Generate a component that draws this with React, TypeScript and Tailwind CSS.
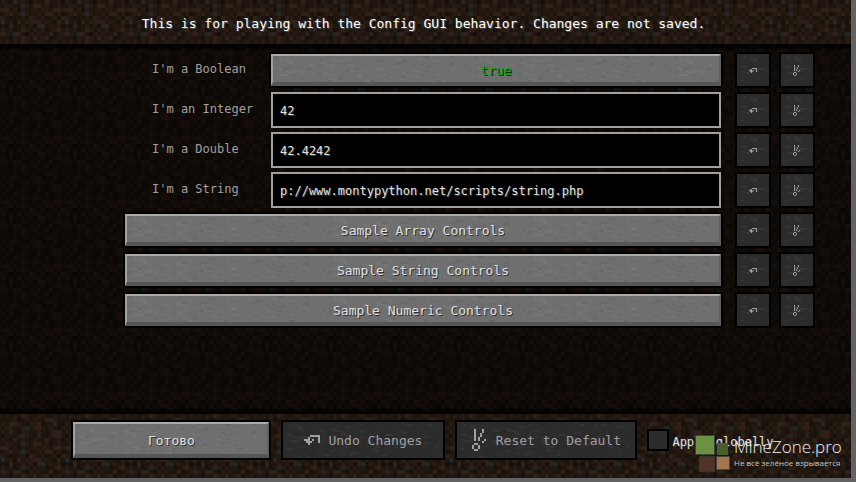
import { useState } from "react";
import type { ReactNode } from "react";

// 16x16 dirt tile, one digit per texel (index into DIRT_COLORS)
const DIRT_COLORS = ["#17110c", "#1e150e", "#261b13", "#2f2118", "#22272a"];

const DIRT_TILE = [
  "1212132112211212",
  "1112012121133211",
  "2133210223011410",
  "1221124133212102",
  "2131022112102331",
  "0211232103102332",
  "2103121021131120",
  "1221142133120121",
  "3312021121221332",
  "1231242112133120",
  "2101120321201203",
  "4120312233121031",
  "1031121203412120",
  "2120132121201231",
  "3214310212113012",
  "1102132131230121",
];

const UNDO_GLYPH = ["...#####", "..#....#", "###.#..#", ".###...#", "..#....."];

const RESET_GLYPH = [
  ".#...#..",
  ".#...#..",
  ".#..#...",
  ".#..#...",
  ".#.#....",
  ".#.#..#.",
  ".....#..",
  ".##.....",
  "#..#....",
  "#..#....",
  ".##.....",
];

interface Speck {
  x: number;
  y: number;
  w: number;
  light: boolean;
}

function makeSpecks(count: number): Speck[] {
  let seed = 7;
  const next = (max: number) => {
    seed = (seed * 16807) % 2147483647;
    return seed % max;
  };
  return Array.from({ length: count }, () => ({
    x: next(100) * 2,
    y: next(18) * 2,
    w: 2 + next(3) * 2,
    light: next(2) === 0,
  }));
}

const SPECKS = makeSpecks(200);

function TextureDefs() {
  return (
    <svg className="absolute size-0" aria-hidden="true">
      <defs>
        <pattern id="dirt" x="1" width="64" height="64" patternUnits="userSpaceOnUse">
          {DIRT_TILE.map((row, y) =>
            row.split("").map((c, x) => (
              <rect
                key={`${x}-${y}`}
                x={x * 4}
                y={y * 4}
                width="4"
                height="4"
                fill={DIRT_COLORS[Number(c)]}
                shapeRendering="crispEdges"
              />
            ))
          )}
        </pattern>
        <pattern id="stone" width="200" height="36" patternUnits="userSpaceOnUse">
          {SPECKS.map((s, i) => (
            <rect
              key={i}
              x={s.x}
              y={s.y}
              width={s.w}
              height="2"
              fill={s.light ? "#ffffff" : "#000000"}
              opacity={s.light ? 0.03 : 0.045}
            />
          ))}
        </pattern>
      </defs>
    </svg>
  );
}

function Texture({ id, shift = 0 }: { id: "dirt" | "stone"; shift?: number }) {
  return (
    <svg className="pointer-events-none absolute inset-0 size-full" aria-hidden="true">
      <g transform={`translate(0 ${-shift})`}>
        <rect width="100%" height="200%" fill={`url(#${id})`} />
      </g>
    </svg>
  );
}

function PixelIcon({ glyph, className }: { glyph: string[]; className: string }) {
  return (
    <svg
      viewBox={`0 0 8 ${glyph.length}`}
      className={className}
      fill="currentColor"
      shapeRendering="crispEdges"
      aria-hidden="true"
    >
      {glyph.map((row, y) =>
        row.split("").map((c, x) =>
          c === "#" ? <rect key={`${x}-${y}`} x={x} y={y} width="1" height="1" /> : null
        )
      )}
    </svg>
  );
}

interface StoneButtonProps {
  children: ReactNode;
  id?: string;
  className?: string;
  onClick?: () => void;
}

function StoneButton({ children, id, className = "", onClick }: StoneButtonProps) {
  return (
    <button
      id={id}
      type="button"
      onClick={onClick}
      className={`border-2 border-black text-[13px] text-[#e0e0e0] [text-shadow:1px_1px_0_#303030] ${className}`}
    >
      <span className="relative flex size-full items-center justify-center border-2 border-b-4 border-t-[#aaaaaa] border-r-[#606060] border-b-[#565656] border-l-[#a0a0a0] bg-[#6f6f6f]">
        <Texture id="stone" />
        <span className="relative pt-1">{children}</span>
      </span>
    </button>
  );
}

interface DisabledButtonProps {
  children: ReactNode;
  className?: string;
  label?: string;
}

function DisabledButton({ children, className = "", label }: DisabledButtonProps) {
  return (
    <button
      type="button"
      disabled
      aria-label={label}
      className={`relative flex shrink-0 items-center justify-center border-2 border-black bg-[#2c2c2c] text-[13px] text-[#a0a0a0] ${className}`}
    >
      <Texture id="stone" />
      {children}
    </button>
  );
}

function Row({ name, children }: { name: string; children: ReactNode }) {
  return (
    <div className="flex h-9 items-stretch">
      {children}
      <DisabledButton className="ml-3 w-9" label={`Undo ${name}`}>
        <PixelIcon glyph={UNDO_GLYPH} className="relative h-[5px] w-2" />
      </DisabledButton>
      <DisabledButton className="ml-2 w-9" label={`Reset ${name}`}>
        <PixelIcon glyph={RESET_GLYPH} className="relative h-[11px] w-2" />
      </DisabledButton>
    </div>
  );
}

const LABEL_CLASS = "w-[146px] shrink-0 self-center pb-0.5 pl-[29px] text-xs text-[#a0a0a0]";

function TextRow({ id, label, initial }: { id: string; label: string; initial: string }) {
  const [value, setValue] = useState(initial);
  return (
    <Row name={label}>
      <label htmlFor={id} className={LABEL_CLASS}>
        {label}
      </label>
      <input
        id={id}
        type="text"
        value={value}
        onChange={(e) => setValue(e.target.value)}
        className="mx-0.5 min-w-0 flex-1 border-2 border-[#a0a0a0] bg-black px-[7px] pt-0.5 text-xs text-[#e0e0e0] outline-none [text-shadow:1px_1px_0_#383838]"
      />
    </Row>
  );
}

function Watermark() {
  return (
    <div className="pointer-events-none absolute right-[5px] bottom-[5px] flex items-end gap-[3px] font-['Open_Sans',sans-serif]">
      <svg width="36" height="38" viewBox="0 0 36 38" aria-hidden="true">
        <rect x="0.5" y="0.5" width="19" height="19" fill="#6d9142" stroke="#3c4436" />
        <rect x="22" y="8" width="11" height="12" fill="#485f2c" />
        <rect x="4.5" y="21.5" width="15" height="15" fill="#503425" stroke="#3a3330" />
        <rect x="21.5" y="21.5" width="13" height="13" fill="#a57450" stroke="#4d4038" />
      </svg>
      <div className="w-[112px] pb-1 whitespace-nowrap">
        <div className="text-[17px] leading-5 font-light text-[#f0f0f0]">MineZone.pro</div>
        <div className="text-[8px] leading-3 text-[#c8c4c0]">Не всё зелёное взрывается</div>
      </div>
    </div>
  );
}

export default function App() {
  const [flag, setFlag] = useState(true);
  const [globally, setGlobally] = useState(false);

  return (
    <div className="relative flex min-h-screen flex-col border-r-[5px] border-b-4 border-[#626262] bg-black font-['DejaVu_Sans_Mono',monospace]">
      <TextureDefs />

      <header className="relative h-11 shrink-0 overflow-hidden">
        <Texture id="dirt" shift={24} />
        <h1 className="relative pt-3.5 pr-1 text-center text-[13px] leading-5 whitespace-nowrap text-white [text-shadow:1px_1px_0_#4a4a4a]">
          This is for playing with the Config GUI behavior. Changes are not saved.
        </h1>
      </header>

      <main className="relative flex-1 overflow-hidden">
        <Texture id="dirt" shift={4} />
        <div className="absolute inset-0 bg-black/55" />
        <div className="absolute inset-x-0 top-0 h-2 bg-linear-to-b from-black to-transparent" />
        <div className="absolute inset-x-0 bottom-0 h-2 bg-linear-to-t from-black to-transparent" />

        <div className="relative flex flex-col gap-1 pt-2 pr-9 pl-[123px]">
          <Row name="I'm a Boolean">
            <label htmlFor="boolean" className={LABEL_CLASS}>
              I'm a Boolean
            </label>
            <StoneButton id="boolean" className="flex-1" onClick={() => setFlag(!flag)}>
              <span className={flag ? "text-[#00a800] [text-shadow:1px_1px_0_#002a00]" : "text-[#aa0000]"}>
                {String(flag)}
              </span>
            </StoneButton>
          </Row>
          <TextRow id="integer" label="I'm an Integer" initial="42" />
          <TextRow id="double" label="I'm a Double" initial="42.4242" />
          <TextRow id="string" label="I'm a String" initial="p://www.montypython.net/scripts/string.php" />
          {["Sample Array Controls", "Sample String Controls", "Sample Numeric Controls"].map((title) => (
            <Row key={title} name={title}>
              <StoneButton className="flex-1">{title}</StoneButton>
            </Row>
          ))}
        </div>
      </main>

      <footer className="relative flex h-16 shrink-0 items-center justify-center gap-2.5 overflow-hidden pt-1.5 pr-1.5 pb-[18px]">
        <Texture id="dirt" />
        <StoneButton className="relative h-10 w-[200px] shrink-0">Готово</StoneButton>
        <DisabledButton className="h-10 w-[164px] gap-2">
          <PixelIcon glyph={UNDO_GLYPH} className="relative h-2.5 w-4" />
          <span className="relative pt-0.5">Undo Changes</span>
        </DisabledButton>
        <DisabledButton className="h-10 w-[182px] gap-2">
          <PixelIcon glyph={RESET_GLYPH} className="relative h-[22px] w-4" />
          <span className="relative pt-0.5">Reset to Default</span>
        </DisabledButton>
        <label className="relative flex items-center gap-[3px] text-xs whitespace-nowrap text-[#e0e0e0] [text-shadow:1px_1px_0_#383838]">
          <input
            type="checkbox"
            checked={globally}
            onChange={(e) => setGlobally(e.target.checked)}
            className="size-[22px] appearance-none border-2 border-black bg-[#2c2c2c] checked:bg-[#6f6f6f]"
          />
          <span className="pt-1">Apply globally</span>
        </label>
      </footer>

      <Watermark />
    </div>
  );
}
